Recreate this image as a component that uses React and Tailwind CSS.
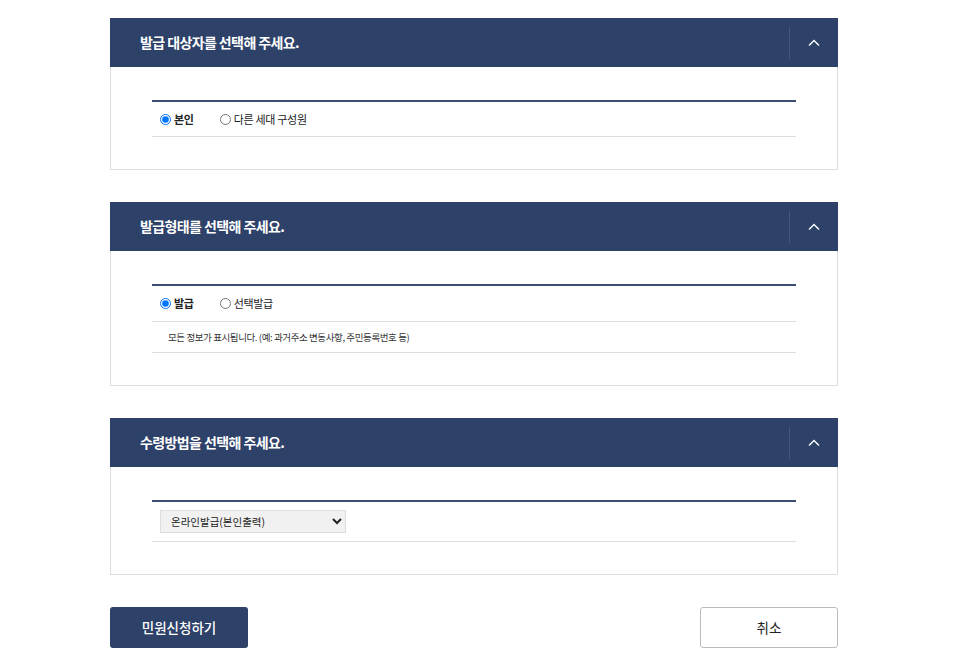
import React from "react";

const font = { fontFamily: '"Noto Sans CJK KR", "Noto Sans", sans-serif' };

function Chevron() {
  return (
    <svg width="12" height="8" viewBox="0 0 12 8" fill="none">
      <path d="M1 6.5L6 1.5L11 6.5" stroke="#ffffff" strokeWidth="1.4" />
    </svg>
  );
}

function Panel({ title, children }) {
  return (
    <div className="border border-[#dddddd] bg-white">
      <div className="-mx-px -mt-px flex h-[49px] items-center bg-[#2d4169]">
        <div className="flex-1 pl-[30px] text-[14px] font-bold tracking-[-0.6px] text-white">{title}</div>
        <div className="h-[32px] w-px bg-[#43577f]" />
        <div className="flex w-[48px] items-center justify-center">
          <Chevron />
        </div>
      </div>
      <div className="px-[41px] pb-[32px] pt-[33px]">
        <div className="border-t-2 border-[#3a4d70]">{children}</div>
      </div>
    </div>
  );
}

function Radio({ label, checked, bold }) {
  return (
    <label className="flex items-center gap-[3px]">
      <input
        type="radio"
        name={label}
        defaultChecked={checked}
        className="m-0 h-[11px] w-[11px]"
      />
      <span className={`text-[11px] tracking-[-0.3px] text-[#222] ${bold ? "font-bold" : ""}`}>{label}</span>
    </label>
  );
}

export default function App() {
  return (
    <div className="min-h-[666px] bg-white pt-[18px]" style={font}>
      <div className="ml-[110px] flex w-[728px] flex-col gap-[32px]">
        <Panel title="발급 대상자를 선택해 주세요.">
          <div className="flex h-[35px] items-center gap-[26px] border-b border-[#dddddd] pl-[8px]">
            <Radio label="본인" checked bold />
            <Radio label="다른 세대 구성원" />
          </div>
        </Panel>

        <Panel title="발급형태를 선택해 주세요.">
          <div className="flex h-[36px] items-center gap-[26px] border-b border-[#dddddd] pl-[8px]">
            <Radio label="발급" checked bold />
            <Radio label="선택발급" />
          </div>
          <div className="flex h-[31px] items-center border-b border-[#dddddd] pl-[16px] text-[9.5px] tracking-[-0.4px] text-[#333]">
            모든 정보가 표시됩니다. (예: 과거주소 변동사항, 주민등록번호 등)
          </div>
        </Panel>

        <Panel title="수령방법을 선택해 주세요.">
          <div className="flex h-[40px] items-center border-b border-[#dddddd] pl-[8px]">
            <select
              className="h-[23px] w-[186px] border border-[#dddddd] bg-[#f1f1f1] pl-[6px] text-[10.5px] text-[#222]"
              defaultValue="a"
            >
              <option value="a">온라인발급(본인출력)</option>
            </select>
          </div>
        </Panel>

        <div className="flex items-center justify-between">
          <button className="h-[41px] w-[138px] rounded-[3px] bg-[#2d4169] text-[13.5px] font-medium text-white">
            민원신청하기
          </button>
          <button className="h-[41px] w-[138px] rounded-[3px] border border-[#bbbbbb] bg-white text-[13.5px] text-[#222]">
            취소
          </button>
        </div>
      </div>
    </div>
  );
}
